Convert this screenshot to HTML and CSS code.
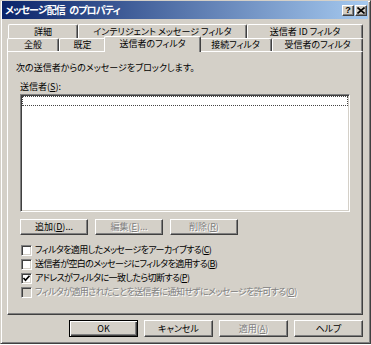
FILE: index.html
```html
<!DOCTYPE html>
<html lang="ja">
<head>
  <meta charset="UTF-8">
  <title>メッセージ配信 のプロパティ</title>
  <link rel="stylesheet" href="styles.css">
</head>
<body>
  <div class="window">
    <div class="titlebar">
      <span class="title">メッセージ配信 のプロパティ</span>
      <div class="caption-btns">
        <span class="cap-btn cap-help">?</span>
        <span class="cap-btn cap-close">
          <svg width="8" height="7" viewBox="0 0 8 7"><path d="M0.5 0.5 L7.5 6.5 M7.5 0.5 L0.5 6.5" stroke="#000" stroke-width="1.6"/></svg>
        </span>
      </div>
    </div>

    <div class="dialog">
      <div class="tabrow back">
        <div class="tab" style="width:70px">詳細</div>
        <div class="tab" style="width:169px">インテリジェント メッセージ フィルタ</div>
        <div class="tab" style="width:116px">送信者 ID フィルタ</div>
      </div>
      <div class="tabrow front">
        <div class="tab" style="width:52px">全般</div>
        <div class="tab" style="width:47px">既定</div>
        <div class="tab selected" style="width:97px">送信者のフィルタ</div>
        <div class="tab" style="width:73px">接続フィルタ</div>
        <div class="tab" style="width:91px">受信者のフィルタ</div>
      </div>

      <section class="panel">
        <p class="intro">次の送信者からのメッセージをブロックします。</p>
        <div class="block">
          <div class="label">送信者(<u>S</u>):</div>
          <div class="listbox">
            <div class="focus-row"></div>
          </div>
          <div class="list-buttons">
            <button class="btn">追加(<u>D</u>)...</button>
            <button class="btn disabled">編集(<u>E</u>)...</button>
            <button class="btn disabled">削除(<u>R</u>)</button>
          </div>
          <div class="checks">
            <label class="check"><span class="box"></span>フィルタを適用したメッセージをアーカイブする(<u>C</u>)</label>
            <label class="check"><span class="box"></span>送信者が空白のメッセージにフィルタを適用する(<u>B</u>)</label>
            <label class="check"><span class="box"><svg width="9" height="9" viewBox="0 0 9 9"><path d="M1.5 4 L3.5 6.2 L7.5 1.8" fill="none" stroke="#000" stroke-width="1.7"/></svg></span>アドレスがフィルタに一致したら切断する(<u>P</u>)</label>
            <label class="check disabled"><span class="box"></span>フィルタが適用されたことを送信者に通知せずにメッセージを許可する(<u>O</u>)</label>
          </div>
        </div>
      </section>

      <div class="dlg-buttons">
        <button class="btn wide default">OK</button>
        <button class="btn wide">キャンセル</button>
        <button class="btn wide disabled">適用(<u>A</u>)</button>
        <button class="btn wide">ヘルプ</button>
      </div>
    </div>
  </div>
</body>
</html>
```

FILE: styles.css
```css
body {
  margin: 0;
  background: #fff;
  font-family: "Noto Sans CJK JP", "Liberation Sans", sans-serif;
  font-size: 9px;
  font-feature-settings: "palt";
  color: #000;
}
.window {
  width: 371px;
  height: 344px;
  box-sizing: border-box;
  background: #d4d0c8;
  border: 1px solid;
  border-color: #d4d0c8 #404040 #404040 #d4d0c8;
  box-shadow: inset 1px 1px #fff, inset -1px -1px #808080;
  padding: 0 2px 2px 1px;
}
.titlebar {
  height: 18px;
  display: flex;
  align-items: center;
  justify-content: space-between;
  padding: 0 1px 0 3px;
  background: linear-gradient(to right, #0a246a, #a6caf0);
}
.title {
  color: #fff;
  font-weight: bold;
  font-size: 10px;
  letter-spacing: -0.9px;
  word-spacing: 3px;
  line-height: 14px;
}
.caption-btns {
  display: flex;
  gap: 1px;
}
.cap-btn {
  width: 12px;
  height: 11px;
  box-sizing: border-box;
  background: #d4d0c8;
  border: 1px solid;
  border-color: #fff #404040 #404040 #fff;
  box-shadow: inset -1px -1px #808080;
  display: flex;
  align-items: center;
  justify-content: center;
  font-family: "Liberation Sans", sans-serif;
  font-weight: bold;
  font-size: 9px;
  line-height: 9px;
}
.dialog {
  padding: 5px 5px 0 5px;
}
.tabrow {
  display: flex;
}
.tabrow.back {
  height: 14px;
  margin-left: 1px;
}
.tabrow.front {
  height: 13px;
}
.tab {
  box-sizing: border-box;
  border-top: 1px solid #fff;
  border-left: 1px solid #fff;
  border-right: 1px solid #404040;
  box-shadow: inset -1px 0 #808080;
  border-radius: 2px 2px 0 0;
  display: flex;
  align-items: center;
  justify-content: center;
  line-height: 12px;
  white-space: nowrap;
}
.tab.selected {
  position: relative;
  z-index: 1;
  background: #d4d0c8;
  margin: -2px -2px -1px -2px;
  padding-bottom: 1px;
}
.panel {
  height: 264px;
  box-sizing: border-box;
  border: 1px solid;
  border-color: #fff #404040 #404040 #fff;
  box-shadow: inset -1px -1px #808080;
  padding: 9px 0 0 8px;
}
.intro {
  margin: 0;
  line-height: 14px;
}
.block {
  margin-left: 4px;
}
.label {
  margin-top: 5px;
  line-height: 14px;
}
.listbox {
  width: 330px;
  height: 118px;
  box-sizing: border-box;
  background: #fff;
  border: 1px solid;
  border-color: #808080 #fff #fff #808080;
  box-shadow: inset 1px 1px #404040, inset -1px -1px #d4d0c8;
  padding: 1px;
}
.focus-row {
  height: 10px;
  box-sizing: border-box;
  border: 1px dotted #444;
}
.list-buttons {
  display: flex;
  gap: 7px;
  margin-top: 7px;
}
.btn {
  width: 68px;
  height: 16px;
  box-sizing: border-box;
  padding: 0;
  background: #d4d0c8;
  border: 1px solid;
  border-color: #fff #404040 #404040 #fff;
  box-shadow: inset -1px -1px #808080;
  font: inherit;
  line-height: 12px;
  color: #000;
}
.btn.disabled {
  color: #808080;
  text-shadow: 1px 1px #fff;
}
.checks {
  margin-top: 8px;
  letter-spacing: -0.6px;
}
.check {
  display: flex;
  align-items: center;
  height: 14px;
  line-height: 14px;
  white-space: nowrap;
}
.check .box {
  width: 11px;
  height: 11px;
  box-sizing: border-box;
  margin: 0 3px 0 1px;
  background: #fff;
  border: 1px solid;
  border-color: #808080 #fff #fff #808080;
  box-shadow: inset 1px 1px #404040, inset -1px -1px #d4d0c8;
  display: flex;
  align-items: center;
  justify-content: center;
}
.check.disabled {
  color: #808080;
  text-shadow: 1px 1px #fff;
}
.check.disabled .box {
  background: #d4d0c8;
}
.dlg-buttons {
  display: flex;
  justify-content: flex-end;
  gap: 6px;
  margin-top: 5px;
  letter-spacing: -0.5px;
}
.btn.wide {
  width: 69px;
  height: 17px;
}
.btn.default {
  border: 1px solid #000;
  box-shadow: inset 1px 1px #fff, inset -1px -1px #404040, inset -2px -2px #808080;
}
```
